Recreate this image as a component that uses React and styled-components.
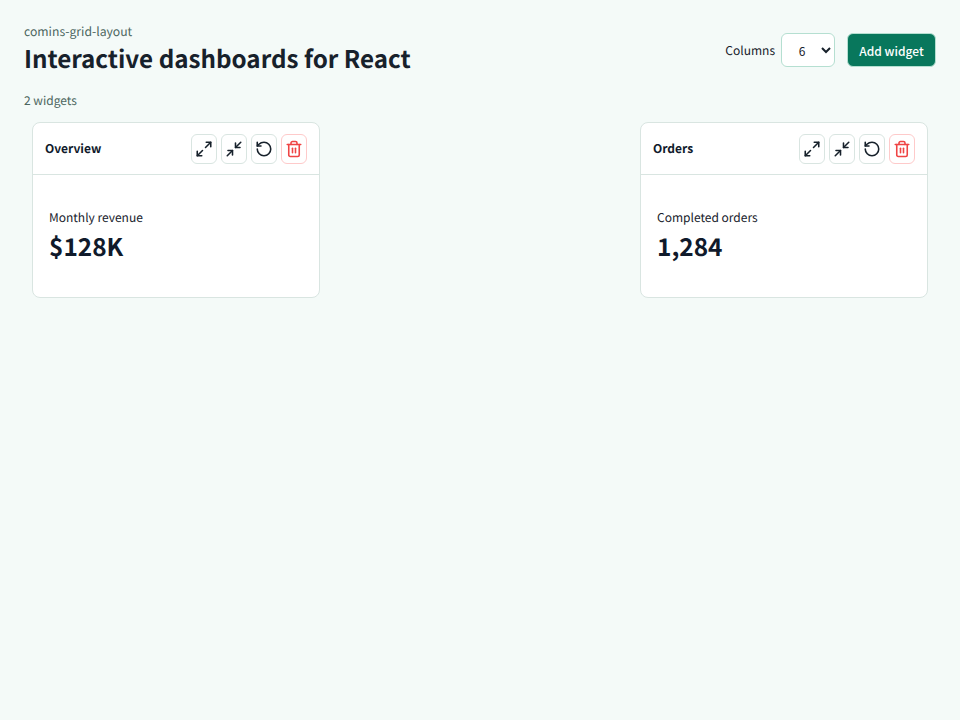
import React from 'react'
import styled, { createGlobalStyle } from 'styled-components'
import { Maximize2, Minimize2, RotateCcw, Trash2 } from 'lucide-react'

const widgets = [
  { id: 'overview', title: 'Overview', label: 'Monthly revenue', value: '$128K', col: '1 / span 2' },
  { id: 'orders', title: 'Orders', label: 'Completed orders', value: '1,284', col: '5 / span 2' },
]

export default function App() {
  return (
    <>
      <GlobalStyle />
      <Page>
        <Header>
          <div>
            <Eyebrow>comins-grid-layout</Eyebrow>
            <Title>Interactive dashboards for React</Title>
          </div>
          <Controls>
            <ColumnsLabel>
              Columns
              <ColumnsSelect defaultValue="6">
                <option value="4">4</option>
                <option value="6">6</option>
                <option value="8">8</option>
                <option value="12">12</option>
              </ColumnsSelect>
            </ColumnsLabel>
            <AddButton>Add widget</AddButton>
          </Controls>
        </Header>
        <Count>2 widgets</Count>
        <Grid>
          {widgets.map((w) => (
            <Card key={w.id} $col={w.col}>
              <CardHead>
                <CardTitle>{w.title}</CardTitle>
                <Actions>
                  <IconButton aria-label="Expand"><Maximize2 size={18} strokeWidth={2.1} /></IconButton>
                  <IconButton aria-label="Shrink"><Minimize2 size={18} strokeWidth={2.1} /></IconButton>
                  <IconButton aria-label="Reset"><RotateCcw size={18} strokeWidth={2.1} /></IconButton>
                  <IconButton $danger aria-label="Remove"><Trash2 size={18} strokeWidth={2.1} /></IconButton>
                </Actions>
              </CardHead>
              <CardBody>
                <Label>{w.label}</Label>
                <Value>{w.value}</Value>
              </CardBody>
            </Card>
          ))}
        </Grid>
      </Page>
    </>
  )
}

const GlobalStyle = createGlobalStyle`
  html, body {
    margin: 0;
    background: #f4faf8;
  }
  body {
    font-family: "Noto Sans CJK SC", "Noto Sans", sans-serif;
    color: #17212b;
    text-rendering: geometricPrecision;
  }
`

const Page = styled.div`
  min-height: 720px;
  box-sizing: border-box;
  padding: 24px;
`

const Header = styled.header`
  display: flex;
  justify-content: space-between;
  align-items: center;
`

const Eyebrow = styled.div`
  font-size: 12.2px;
  line-height: 15px;
  color: #4c6660;
`

const Title = styled.h1`
  margin: 0;
  font-size: 24.2px;
  line-height: 38px;
  font-weight: 700;
  color: #17212b;
`

const Controls = styled.div`
  display: flex;
  align-items: center;
  gap: 12px;
  margin-bottom: 1px;
`

const ColumnsLabel = styled.label`
  display: flex;
  align-items: center;
  gap: 6px;
  font-size: 12px;
  color: #17212b;
`

const ColumnsSelect = styled.select`
  width: 54px;
  height: 34px;
  padding: 0 8px;
  border: 1px solid #b5dfd1;
  border-radius: 6px;
  background: #fff;
  font: inherit;
  color: #17212b;
  text-align: center;
`

const AddButton = styled.button`
  width: 89px;
  height: 34px;
  padding: 0;
  border: 1px solid #b5dfd1;
  border-radius: 6px;
  background: #08775c;
  color: #fff;
  font-family: inherit;
  font-size: 12px;
  font-weight: 500;
`

const Count = styled.div`
  margin-top: 14px;
  font-size: 12px;
  line-height: 20px;
  color: #4c6660;
`

const Grid = styled.div`
  display: grid;
  grid-template-columns: repeat(6, 1fr);
  margin-top: 3px;
`

const Card = styled.section`
  grid-column: ${(p) => p.$col};
  margin: 8px;
  height: 176px;
  box-sizing: border-box;
  border: 1px solid #d9e5e1;
  border-radius: 8px;
  background: #fff;
`

const CardHead = styled.div`
  display: flex;
  justify-content: space-between;
  align-items: center;
  height: 51px;
  padding: 0 12px;
  border-bottom: 1px solid #d9e5e1;
`

const CardTitle = styled.div`
  font-size: 12px;
  font-weight: 700;
  color: #101a2b;
`

const Actions = styled.div`
  display: flex;
  gap: 4px;
`

const IconButton = styled.button`
  display: flex;
  align-items: center;
  justify-content: center;
  width: 26px;
  height: 30px;
  padding: 0;
  border: 1px solid ${(p) => (p.$danger ? '#fecaca' : '#d9e5e1')};
  border-radius: 6px;
  background: #fff;
  color: ${(p) => (p.$danger ? '#ef4444' : '#17212b')};
`

const CardBody = styled.div`
  padding: 33px 16px 0;
`

const Label = styled.div`
  font-size: 12px;
  line-height: 20px;
  color: #17212b;
`

const Value = styled.div`
  margin-top: 3px;
  font-size: 24.4px;
  line-height: 32px;
  font-weight: 700;
  color: #101a2b;
`
